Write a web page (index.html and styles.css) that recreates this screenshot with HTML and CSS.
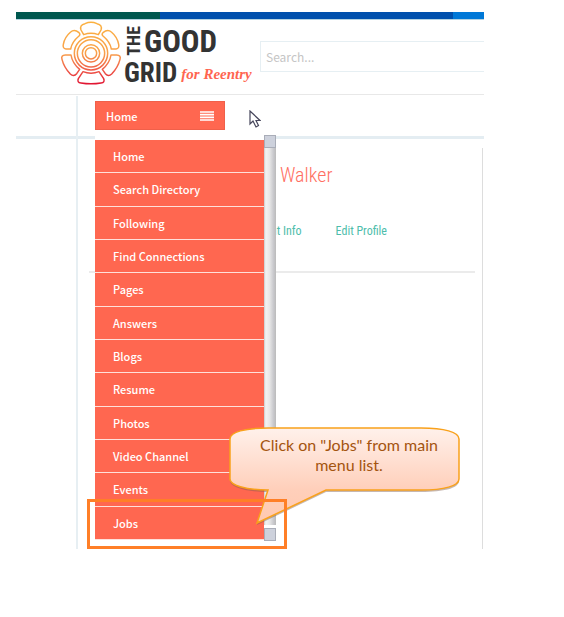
FILE: index.html
```html
<!DOCTYPE html>
<html lang="en">
<head>
<meta charset="utf-8">
<title>The Good Grid for Reentry</title>
<link rel="stylesheet" href="styles.css">
</head>
<body>
<div class="page">
  <div class="stripes"><span></span><span></span><span></span></div>
  <header class="header">
    <a class="logo" href="#">
      <svg class="flower" viewBox="15 21 192 198" aria-hidden="true">
        <defs>
          <linearGradient id="sun" gradientUnits="userSpaceOnUse" x1="0" y1="25" x2="0" y2="215">
            <stop offset="0" stop-color="#fbb13f"/>
            <stop offset=".5" stop-color="#f9a04a"/>
            <stop offset=".75" stop-color="#f0604a"/>
            <stop offset="1" stop-color="#e01030"/>
          </linearGradient>
        </defs>
        <g fill="none" stroke="url(#sun)" stroke-width="4.5" stroke-linejoin="round">
          <path d="M86 65 L78 51 Q73 36 90 32 Q108 24 126 32 Q143 36 138 51 L130 65 Q108 57 86 65Z"/>
          <path d="M47 108 Q51 86 72 69 Q77 64 72 59 Q58 47 47 57 Q29 72 25 94 Q22 106 33 108 Z"/>
          <path d="M169 108 Q165 86 144 69 Q139 64 144 59 Q158 47 169 57 Q187 72 191 94 Q194 106 183 108 Z"/>
          <path d="M48 126 Q52 151 74 169 L65 182 Q56 192 46 183 Q27 163 21 139 Q17 127 31 126 Z"/>
          <path d="M168 126 Q164 151 142 169 L151 182 Q160 192 170 183 Q189 163 195 139 Q199 127 185 126 Z"/>
          <path d="M84 176 Q108 185 132 176 L146 197 Q151 208 138 210 Q108 215 78 210 Q65 208 70 197 Z"/>
          <circle cx="108" cy="121" r="50"/>
          <circle cx="108" cy="121" r="41"/>
          <circle cx="108" cy="121" r="26"/>
          <circle cx="108" cy="121" r="17"/>
        </g>
      </svg>
      <span class="wordmark">
        <span class="line"><span class="the">THE</span><span class="good">GOOD</span></span>
        <span class="line"><span class="grid">GRID</span><span class="script">for Reentry</span></span>
      </span>
    </a>
    <input class="search" type="text" placeholder="Search..." aria-label="Search">
  </header>

  <div class="workspace">
    <div class="toolbar">
      <button class="toggle" type="button">Home
        <svg viewBox="0 0 14 10" aria-hidden="true"><path d="M0 1H14M0 3.700H14M0 6.300H14M0 9H14" stroke="#fff" stroke-width="1.700"/></svg>
      </button>
      <svg class="pointer" viewBox="0 0 12 18" aria-hidden="true"><path d="M1 1V14L4 11L7 17L9.500 15.500L7 10.500H11Z" fill="#fff" stroke="#45455a" stroke-width="1.2"/></svg>
    </div>
    <main class="profile">
      <h1>Walker</h1>
      <div class="tabs"><a href="#">Account Info</a><a href="#">Edit Profile</a></div>
    </main>

    <nav class="menu" aria-label="Main menu">
      <div class="items">
        <a href="#">Home</a>
        <a href="#">Search Directory</a>
        <a href="#">Following</a>
        <a href="#">Find Connections</a>
        <a href="#">Pages</a>
        <a href="#">Answers</a>
        <a href="#">Blogs</a>
        <a href="#">Resume</a>
        <a href="#">Photos</a>
        <a href="#">Video Channel</a>
        <a href="#">Events</a>
        <a href="#">Jobs</a>
      </div>
      <div class="scroll"><i></i><b></b><i></i></div>
    </nav>

    <div class="callout">
      <svg viewBox="0 0 234 100" aria-hidden="true">
        <defs>
          <linearGradient id="peach" x1="0" y1="0" x2="0" y2="1">
            <stop offset="0" stop-color="#fff1eb"/>
            <stop offset=".65" stop-color="#ffcfba"/>
            <stop offset="1" stop-color="#ffc9b0"/>
          </linearGradient>
        </defs>
        <path d="M1 12C1 5 16 2 39 2H192C215 2 230 5 230 12V53C230 60 215 64 192 64H97L28 97L39 64C16 64 1 59 1 53Z" transform="translate(0 1)" fill="#806050" opacity=".45"/>
        <path d="M1 12C1 5 16 1 39 1H192C215 1 230 5 230 12V52C230 59 215 63 192 63H97L28 96L39 63C16 63 1 58 1 52Z" fill="url(#peach)" stroke="#f9a11b" stroke-width="1.5"/>
      </svg>
      <p>Click on "Jobs" from main<br>menu list.</p>
    </div>
    <div class="highlight"></div>
  </div>
</div>
</body>
</html>
```
FILE: styles.css
```css
* { box-sizing: border-box; }

body {
  margin: 0;
  background: #fff;
  font-family: "Noto Sans CJK SC", "Noto Sans", sans-serif;
  font-size: 11px;
}

a { text-decoration: none; }

.page { margin: 12px 80px 0 16px; }

.stripes {
  display: grid;
  grid-template-columns: 144px 1fr 31px;
  height: 8px;
  border-bottom: 1px solid #b5d3e2;
}
.stripes span:nth-child(1) { background: #005850; }
.stripes span:nth-child(2) { background: #0050ad; }
.stripes span:nth-child(3) { background: #0078d7; }

.header {
  display: flex;
  height: 75px;
  padding-left: 44px;
  border-bottom: 1px solid #e8e8e8;
}

.logo {
  display: flex;
  flex-shrink: 0;
  width: 200px;
  color: #333;
}
.flower {
  flex-shrink: 0;
  width: 64px;
  height: 66px;
}

.wordmark {
  padding-top: 5px;
  font-family: "Roboto Condensed", Roboto, sans-serif;
  font-weight: bold;
}
.line {
  display: flex;
  align-items: center;
  height: 32px;
  white-space: nowrap;
}
.the {
  writing-mode: vertical-rl;
  transform: rotate(180deg);
  font-size: 18px;
  line-height: 20px;
}
.good { font-size: 31px; }
.grid { font-size: 27px; }
.script {
  padding: 2px 0 0 4px;
  color: #ff6550;
  font: italic bold 15px "Liberation Serif", serif;
}

.search {
  flex: 1;
  min-width: 0;
  height: 31px;
  margin-top: 21px;
  padding: 0 5px;
  border: solid #e6eff3;
  border-width: 1px 0 1px 1px;
  background: #fff;
  font: inherit;
  font-size: 12px;
}
.search::placeholder { color: #c5c5c5; opacity: 1; }

.workspace {
  position: relative;
  min-height: 454px;
}
.workspace::before {
  content: "";
  position: absolute;
  top: 1px;
  bottom: 0;
  left: 60px;
  width: 2px;
  background: #e7eff3;
}

.toolbar {
  display: flex;
  height: 44px;
  gap: 24px;
  padding: 6px 0 0 79px;
  border-bottom: 3px solid #e4edf2;
}
.toggle {
  display: flex;
  align-items: center;
  justify-content: space-between;
  width: 130px;
  height: 29px;
  padding: 0 10px;
  border: 1px solid #f0604a;
  background: #ff6750;
  color: #fff;
  font: inherit;
  font-weight: 500;
}
.toggle svg { width: 14px; height: 10px; }
.pointer { width: 12px; height: 18px; margin-top: 9px; }

.profile {
  min-height: 401px;
  margin: 9px 1px 0 73px;
  border-right: 1px solid #ddd;
  font-family: "Roboto Condensed", Roboto, sans-serif;
}
.profile h1 {
  margin: 0;
  padding: 15px 0 0 191px;
  color: #ff6f62;
  font-size: 20px;
  font-weight: 300;
  line-height: 24px;
}
.tabs {
  display: flex;
  gap: 34px;
  margin-right: 7px;
  padding: 36px 0 32px 152px;
  border-bottom: 2px solid #ebebeb;
  font-size: 12px;
  line-height: 16px;
}
.tabs a { color: #4dbdab; }

.menu {
  position: absolute;
  top: 40px;
  left: 79px;
  display: flex;
  width: 181px;
  height: 406px;
}
.items {
  display: flex;
  flex: 1;
  flex-direction: column;
  padding: 5px 0 1px;
  background: #fff;
}
.items a {
  display: flex;
  flex: 1;
  align-items: center;
  padding-left: 18px;
  border-bottom: 1px solid #ffe0da;
  background: #ff6750;
  color: #fff;
  font-weight: 500;
  line-height: 20px;
}
.scroll {
  display: flex;
  flex-direction: column;
  width: 12px;
}
.scroll i {
  height: 13px;
  border: 1px solid #a9adb8;
  background: #cdd1dc;
}
.scroll b {
  flex: 1;
  margin-bottom: 3px;
  background: linear-gradient(90deg, #c8c8c8, #f3f3f3 15%, #e8e8e8 45%, #c8c8cc 80%, #bbb);
}

.callout {
  position: absolute;
  top: 332px;
  left: 213px;
  width: 234px;
}
.callout svg { display: block; width: 234px; height: 100px; }
.callout p {
  position: absolute;
  top: 8px;
  right: 0;
  left: 6px;
  margin: 0;
  color: #a4540f;
  font: 16px/20px Lato, sans-serif;
  text-align: center;
}

.highlight {
  position: absolute;
  top: 404px;
  left: 71px;
  width: 200px;
  height: 50px;
  border: 3px solid #ff7f27;
}
```
